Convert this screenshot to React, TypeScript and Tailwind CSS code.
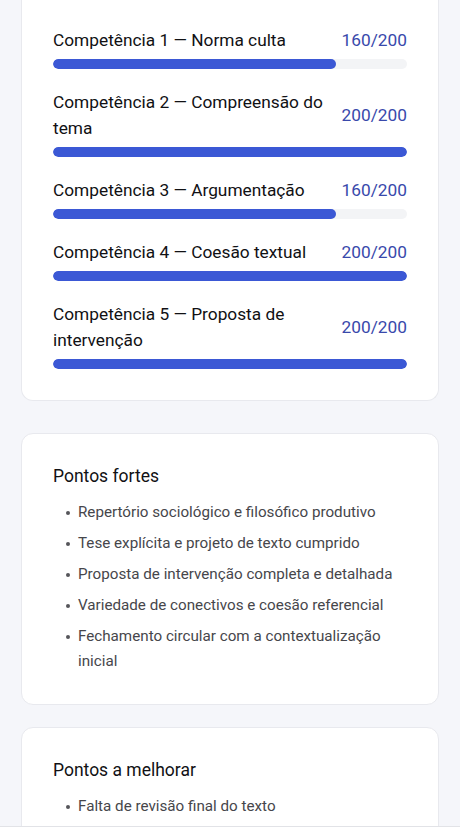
const competencias = [
  { label: 'Competência 1 — Norma culta', score: 160 },
  { label: 'Competência 2 — Compreensão do tema', score: 200 },
  { label: 'Competência 3 — Argumentação', score: 160 },
  { label: 'Competência 4 — Coesão textual', score: 200 },
  { label: 'Competência 5 — Proposta de intervenção', score: 200 },
]

const fortes = [
  'Repertório sociológico e filosófico produtivo',
  'Tese explícita e projeto de texto cumprido',
  'Proposta de intervenção completa e detalhada',
  'Variedade de conectivos e coesão referencial',
  'Fechamento circular com a contextualização inicial',
]

const melhorar = ['Falta de revisão final do texto']

function Lista({ titulo, itens }: { titulo: string; itens: string[] }) {
  return (
    <>
      <h2 className="text-[17.5px] leading-6 text-[#111114]">{titulo}</h2>
      <ul className="mt-3 flex flex-col gap-[6px] pl-[13px]">
        {itens.map((item) => (
          <li key={item} className="flex text-[15.2px] leading-[25px] text-[#46464b]">
            <span className="w-[12px] shrink-0 flex items-start pt-[11px]">
              <span className="w-[4px] h-[4px] rounded-full bg-[#55555a]" />
            </span>
            <span>{item}</span>
          </li>
        ))}
      </ul>
    </>
  )
}

export default function App() {
  return (
    <div
      className="h-[829px] overflow-hidden bg-[#f5f6fa] flex flex-col"
      style={{ fontFamily: 'Roboto, "Noto Sans", sans-serif' }}
    >
      <div className="flex-1 overflow-hidden px-[21px]">
        {/* Notas por competência */}
        <div className="bg-white border border-t-0 border-[#e8e9ee] rounded-b-xl px-[31px] pt-[27px] pb-[31px] flex flex-col gap-5">
          {competencias.map((c) => (
            <div key={c.label}>
              <div className="flex items-center justify-between gap-4">
                <span className="text-[17.3px] leading-[26px] text-[#111114] max-w-[285px]">
                  {c.label}
                </span>
                <span className="text-[17.3px] leading-[26px] text-[#3949ab] shrink-0">
                  {c.score}/200
                </span>
              </div>
              <div className="mt-[6px] h-[10px] rounded-full bg-[#f3f4f6] overflow-hidden">
                <div
                  className="h-full rounded-full bg-[#3b58d5]"
                  style={{ width: `${(c.score / 200) * 100}%` }}
                />
              </div>
            </div>
          ))}
        </div>

        <div className="mt-[32px] bg-white border border-[#e8e9ee] rounded-xl px-[31px] pt-[30px] pb-[30px]">
          <Lista titulo="Pontos fortes" itens={fortes} />
        </div>

        <div className="mt-[22px] bg-white border border-[#e8e9ee] rounded-xl px-[31px] pt-[30px] pb-[30px]">
          <Lista titulo="Pontos a melhorar" itens={melhorar} />
        </div>
      </div>
      <div className="h-[3px] shrink-0 border-t border-[#e2e3e7] bg-white" />
    </div>
  )
}
